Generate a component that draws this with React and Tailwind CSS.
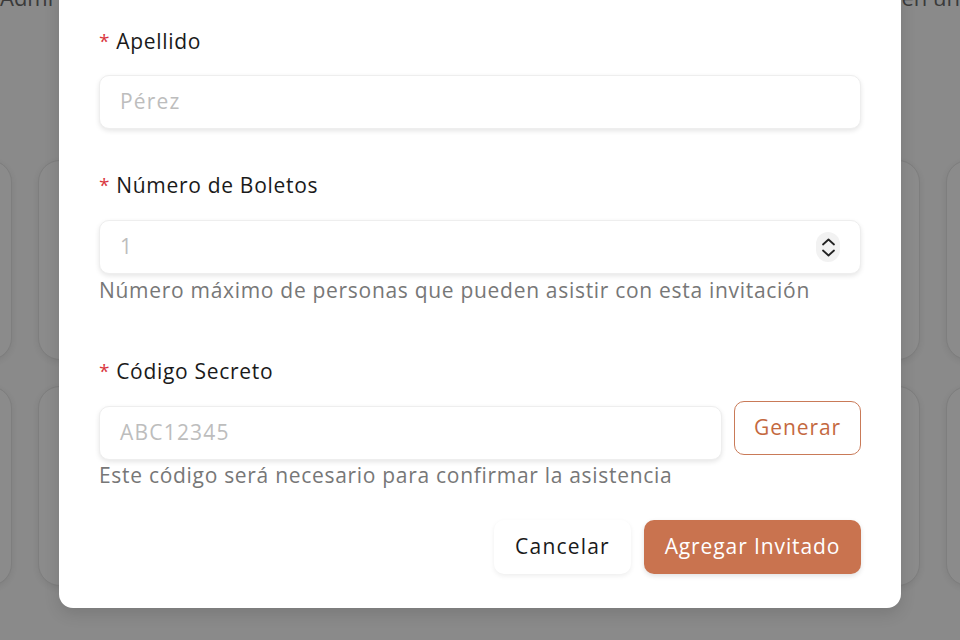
import React from "react";

function Card() {
  return <div className="rounded-[22px] border border-[#7e7e7e] bg-[#8b8b8b] shadow-[0_2px_6px_rgba(0,0,0,0.08)]" />;
}

function Label({ children }) {
  return (
    <div className="flex items-center gap-[6px] text-[21px] leading-[28px] tracking-[0.7px] text-[#1a1a1a]">
      <span className="text-[#d9363e] text-[19px] leading-none">*</span>
      <span>{children}</span>
    </div>
  );
}

function Input({ placeholder, className = "", children }) {
  return (
    <div className={"flex h-[54px] items-center justify-between rounded-[10px] border border-[#eeeeee] bg-white pl-[20px] pr-[20px] shadow-[0_2px_5px_rgba(0,0,0,0.1)] " + className}>
      <span className="text-[21px] tracking-[1.2px] text-[#bdbdbd]">{placeholder}</span>
      {children}
    </div>
  );
}

export default function App() {
  return (
    <div className="relative h-[640px] w-[960px] overflow-hidden bg-[#8a8a8a] font-['Open_Sans','Noto_Sans',sans-serif]">
      {/* background page */}
      <div className="absolute left-0 top-[-19px] text-[22px] text-[#3a3a3a]">Admi</div>
      <div className="absolute right-0 top-[-19px] text-[22px] text-[#3a3a3a]">en un</div>
      <div className="absolute left-[-40px] top-[160px] grid grid-cols-[52px_120px] gap-[26px]" style={{ gridTemplateRows: "200px 200px", rowGap: "26px" }}>
        <Card /><Card /><Card /><Card />
      </div>
      <div className="absolute left-[840px] top-[160px] grid grid-cols-[80px_80px] gap-[26px]" style={{ gridTemplateRows: "200px 200px", rowGap: "26px" }}>
        <Card /><Card /><Card /><Card />
      </div>

      {/* modal */}
      <div className="absolute left-[59px] top-[-20px] h-[628px] w-[842px] rounded-[14px] bg-white px-[40px] pt-[47px] shadow-[0_6px_16px_rgba(0,0,0,0.12)]">
        <Label>Apellido</Label>
        <Input placeholder="Pérez" className="mt-[20px]" />

        <div className="mt-[42px]">
          <Label>Número de Boletos</Label>
        </div>
        <Input placeholder="1" className="mt-[21px]">
          <div className="flex h-[30px] w-[24px] flex-col items-center justify-center rounded-full bg-[#f2f2f2] text-[#222]">
            <svg width="15" height="9" viewBox="0 0 15 9" fill="none" stroke="currentColor" strokeWidth="1.8" strokeLinecap="round" strokeLinejoin="round"><path d="M2 7.5 7.5 2.5l5.5 5" /></svg>
            <svg width="15" height="9" viewBox="0 0 15 9" fill="none" stroke="currentColor" strokeWidth="1.8" strokeLinecap="round" strokeLinejoin="round" className="mt-[3px]"><path d="M2 1.5l5.5 5 5.5-5" /></svg>
          </div>
        </Input>
        <div className="mt-[3px] text-[21px] leading-[26px] tracking-[0.7px] text-[#777777]">Número máximo de personas que pueden asistir con esta invitación</div>

        <div className="mt-[54px]">
          <Label>Código Secreto</Label>
        </div>
        <div className="mt-[16px] flex items-start gap-[12px]">
          <Input placeholder="ABC12345" className="mt-[5px] flex-1" />
          <button className="h-[54px] w-[127px] rounded-[10px] border-[1.5px] border-[#c97a58] bg-white text-[21px] tracking-[0.9px] text-[#c4693f]">Generar</button>
        </div>
        <div className="mt-[2px] text-[21px] leading-[26px] tracking-[0.7px] text-[#777777]">Este código será necesario para confirmar la asistencia</div>

        <div className="mt-[32px] flex justify-end gap-[13px]">
          <button className="h-[54px] w-[137px] rounded-[10px] bg-white text-[21px] tracking-[1.2px] text-[#1a1a1a] shadow-[0_2px_5px_rgba(0,0,0,0.07)]">Cancelar</button>
          <button className="h-[54px] w-[217px] rounded-[10px] bg-[#c9734f] text-[21px] tracking-[0.9px] text-white shadow-[0_2px_5px_rgba(0,0,0,0.12)]">Agregar Invitado</button>
        </div>
      </div>
    </div>
  );
}
